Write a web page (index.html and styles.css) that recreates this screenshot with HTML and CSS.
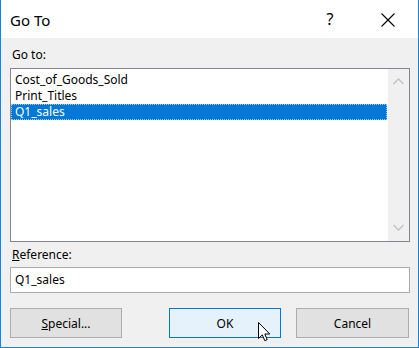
FILE: index.html
```html
<!DOCTYPE html>
<html>
<head>
<meta charset="utf-8">
<link rel="stylesheet" href="styles.css">
</head>
<body>
<div class="window">
  <div class="titlebar">
    <span class="title">Go To</span>
    <span class="help">?</span>
    <span class="close">
      <svg width="14" height="14" viewBox="0 0 14 14"><path d="M0.5 0.5 L13.5 13.5 M13.5 0.5 L0.5 13.5" stroke="#000" stroke-width="1.1" fill="none"/></svg>
    </span>
  </div>
  <div class="content">
    <div class="label">Go to:</div>
    <div class="listbox">
      <div class="items">
        <div class="item">Cost_of_Goods_Sold</div>
        <div class="item">Print_Titles</div>
        <div class="item selected">Q1_sales</div>
      </div>
      <div class="scrollbar">
        <svg class="arrow" width="11" height="7" viewBox="0 0 11 7"><path d="M0.5 6 L5.5 1 L10.5 6" stroke="#c2c2c2" stroke-width="1.3" fill="none"/></svg>
        <svg class="arrow" width="11" height="7" viewBox="0 0 11 7"><path d="M0.5 1 L5.5 6 L10.5 1" stroke="#c2c2c2" stroke-width="1.3" fill="none"/></svg>
      </div>
    </div>
    <div class="label ref-label"><u>R</u>eference:</div>
    <div class="input">Q1_sales</div>
    <div class="buttons">
      <div class="btn special"><u>S</u>pecial...</div>
      <div class="btn ok">OK</div>
      <div class="btn cancel">Cancel</div>
    </div>
  </div>
  <svg class="cursor" width="13" height="20" viewBox="0 0 13 20"><path d="M0.5 0.5 L0.5 16.5 L4.3 12.9 L6.8 18.7 L9.2 17.7 L6.8 12 L11.8 12 Z" fill="#fff" stroke="#000" stroke-width="1" stroke-linejoin="miter"/></svg>
</div>
</body>
</html>
```
FILE: styles.css
```css
html, body {
  margin: 0;
  padding: 0;
  background: #f0f0f0;
}
body {
  font-family: "Noto Sans", "Open Sans", sans-serif;
  font-size: 12px;
  color: #000;
}
.window {
  position: relative;
  width: 419px;
  height: 348px;
  box-sizing: border-box;
  border: 1px solid #1883d7;
  border-top: none;
  background: #f0f0f0;
  display: flex;
  flex-direction: column;
}
.titlebar {
  height: 38px;
  background: #fff;
  display: flex;
  align-items: center;
  padding-left: 9px;
}
.title {
  font-size: 15px;
  flex: 1;
  padding-top: 1px;
}
.help {
  font-size: 16px;
  width: 14px;
  margin-right: 44px;
  text-align: center;
}
.close {
  display: flex;
  margin-right: 23px;
  padding-top: 1px;
}
.content {
  padding: 9px 8px 0 9px;
  display: flex;
  flex-direction: column;
}
.label {
  line-height: 16px;
  height: 16px;
  padding-left: 2px;
}
.listbox {
  margin-top: 5px;
  height: 174px;
  box-sizing: border-box;
  border: 1px solid #828790;
  background: #fff;
  display: flex;
}
.items {
  flex: 1;
  padding-top: 3px;
  padding-right: 1px;
}
.item {
  height: 16px;
  line-height: 16px;
  padding-left: 4px;
  white-space: nowrap;
}
.item.selected {
  background: #0078d7;
  color: #fff;
  outline: 1px dotted #9cc6ec;
  outline-offset: -1px;
}
.scrollbar {
  width: 21px;
  background: #f0f0f0;
  display: flex;
  flex-direction: column;
  justify-content: space-between;
  align-items: center;
  padding: 9px 0 10px;
}
.ref-label {
  margin-top: 5px;
}
.input {
  margin-top: 4px;
  height: 26px;
  box-sizing: border-box;
  border: 1px solid #abadb3;
  background: #fff;
  line-height: 24px;
  padding-left: 4px;
}
.buttons {
  margin-top: 15px;
  display: flex;
}
.btn {
  width: 112px;
  height: 30px;
  box-sizing: border-box;
  border: 1px solid #adadad;
  background: #e1e1e1;
  display: flex;
  align-items: center;
  justify-content: center;
}
.btn.ok {
  background: #e5f1fb;
  border-color: #0078d7;
  margin-left: 47px;
}
.btn.cancel {
  margin-left: 15px;
  width: 113px;
}
.cursor {
  position: absolute;
  left: 257px;
  top: 322px;
}
```
